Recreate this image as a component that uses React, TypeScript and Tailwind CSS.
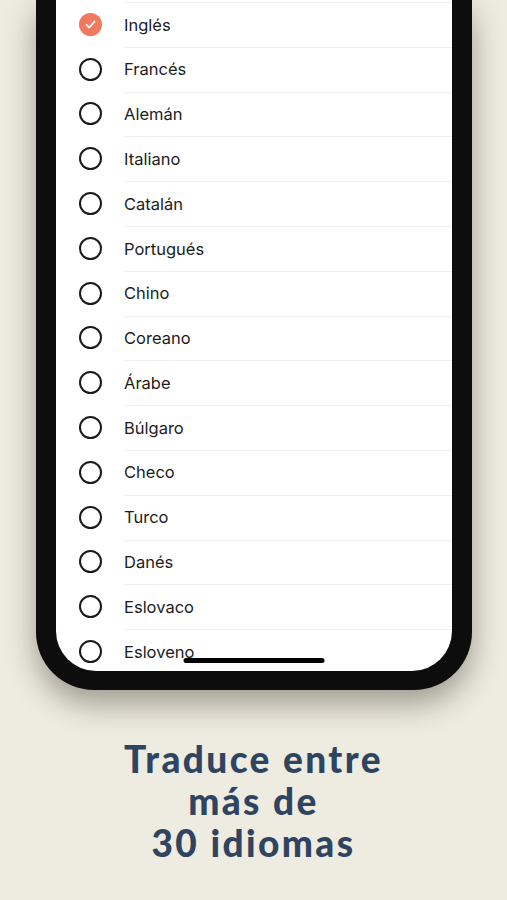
import React from "react";

const languages = [
  "Inglés",
  "Francés",
  "Alemán",
  "Italiano",
  "Catalán",
  "Portugués",
  "Chino",
  "Coreano",
  "Árabe",
  "Búlgaro",
  "Checo",
  "Turco",
  "Danés",
  "Eslovaco",
  "Esloveno",
];

function Radio({ checked }: { checked: boolean }) {
  if (checked) {
    return (
      <div className="w-[23px] h-[23px] rounded-full bg-[#f07a5d] flex items-center justify-center">
        <svg width="13" height="13" viewBox="0 0 13 13" fill="none">
          <path d="M2.5 6.8 L5.3 9.5 L10.5 3.5" stroke="white" strokeWidth="1.8" strokeLinecap="round" strokeLinejoin="round" />
        </svg>
      </div>
    );
  }
  return <div className="w-[23px] h-[23px] rounded-full border-[2px] border-[#1a1a1a]" />;
}

export default function App() {
  return (
    <div className="min-h-[900px] w-full bg-[#eeebe1] overflow-hidden">
      {/* phone frame */}
      <div className="ml-[36px] w-[436px] bg-[#0d0d0d] px-[20px] pb-[19px] rounded-b-[58px] shadow-[0_14px_30px_rgba(40,35,20,0.4)]">
        <div className="relative h-[671px] bg-white rounded-b-[40px] overflow-hidden pt-[2px]">
          {languages.map((lang, i) => (
            <div key={lang} className="flex items-center h-[44.8px]">
              <div className="w-[68px] flex justify-end pr-[22px] shrink-0">
                <Radio checked={i === 0} />
              </div>
              <div className="flex-1 h-full flex items-center border-t border-[#efefef]">
                <span className="text-[16.5px] text-[#1c1c1c] font-['Inter',sans-serif]">{lang}</span>
              </div>
            </div>
          ))}
          <div className="absolute bottom-[8px] left-1/2 -translate-x-1/2 w-[141px] h-[5px] rounded-full bg-black" />
        </div>
      </div>

      {/* caption */}
      <h1 className="mt-[48px] text-center font-['Lato',sans-serif] font-black text-[37px] leading-[42px] tracking-[2.4px] text-[#2e4460]">
        Traduce entre
        <br />
        más de
        <br />
        30 idiomas
      </h1>
    </div>
  );
}
